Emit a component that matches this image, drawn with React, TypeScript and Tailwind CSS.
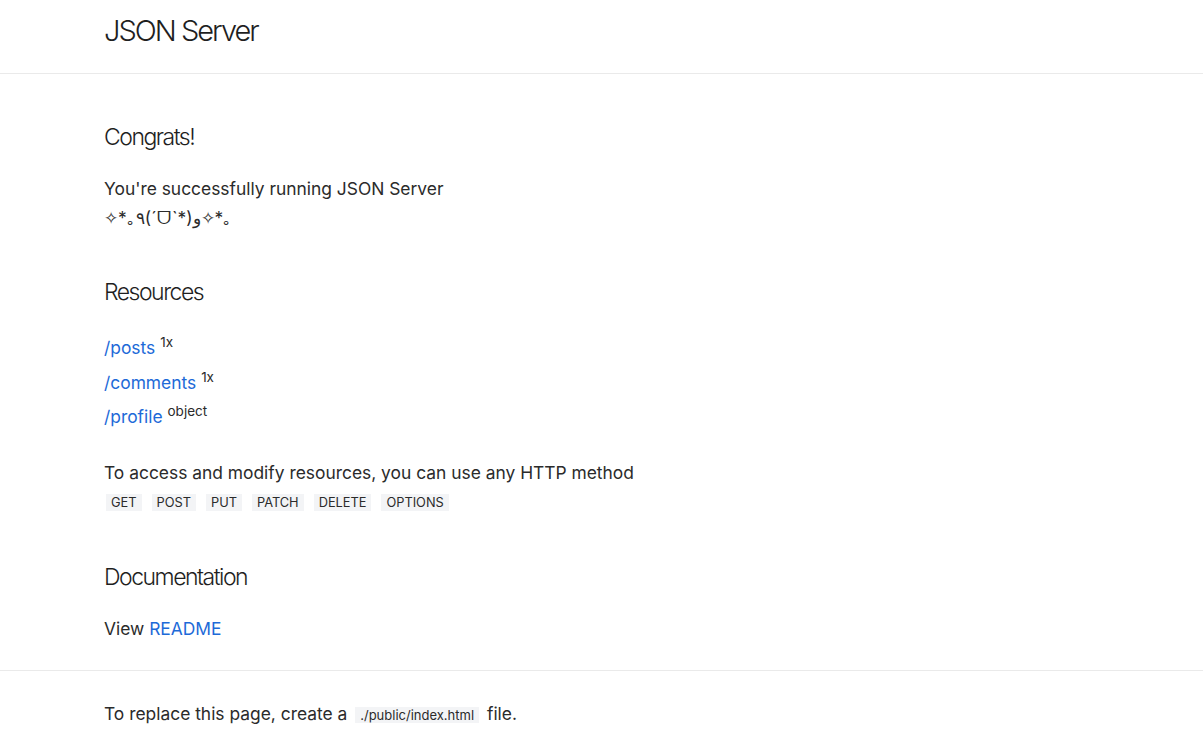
const font = "font-['Inter','Noto_Sans',sans-serif]"

const methods = ["GET", "POST", "PUT", "PATCH", "DELETE", "OPTIONS"]

const resources = [
  { path: "/posts", note: "1x" },
  { path: "/comments", note: "1x" },
  { path: "/profile", note: "object" },
]

export default function App() {
  return (
    <div className={`min-h-screen bg-white text-[#2b2b2b] ${font}`}>
      {/* Header */}
      <header className="border-b border-[#eaeaea]">
        <div className="pl-[104px] h-[73px] pt-[14px]">
          <h1 className="text-[29px] leading-[34px] font-light tracking-[-2px] text-[#1f1f1f]">JSON Server</h1>
        </div>
      </header>

      <main className="pl-[104px] pt-[48px] pb-[27px]">
        {/* Congrats */}
        <section>
          <h2 className="text-[23px] font-light tracking-[-1.5px] text-[#1f1f1f] leading-[30px]">Congrats!</h2>
          <p className="mt-[22px] text-[17.4px] leading-[29px]">
            You're successfully running JSON Server
            <br />
            ✧*｡٩(ˊᗜˋ*)و✧*｡
          </p>
        </section>

        {/* Resources */}
        <section className="mt-[45px]">
          <h2 className="text-[23px] font-light tracking-[-1.5px] text-[#1f1f1f] leading-[30px]">Resources</h2>
          <ul className="mt-[27px] flex flex-col gap-[6.5px]">
            {resources.map((r) => (
              <li key={r.path} className="text-[17.4px] leading-[28px]">
                <a href="#" className="text-[#1d6ad8]">{r.path}</a>{" "}
                <sup className="text-[13.5px]">{r.note}</sup>
              </li>
            ))}
          </ul>
          <p className="mt-[27px] text-[17.4px] leading-[29px]">
            To access and modify resources, you can use any HTTP method
          </p>
          <div className="mt-[7px] flex gap-[10px] ml-[2px]">
            {methods.map((m) => (
              <code key={m} className="bg-[#f3f4f6] px-[5px] text-[12.8px] leading-[17px] font-['Inter',sans-serif]">
                {m}
              </code>
            ))}
          </div>
        </section>

        {/* Documentation */}
        <section className="mt-[51px]">
          <h2 className="text-[23px] font-light tracking-[-1.5px] text-[#1f1f1f] leading-[30px]">Documentation</h2>
          <p className="mt-[22px] text-[17.4px] leading-[29px]">
            View <a href="#" className="text-[#1d6ad8]">README</a>
          </p>
        </section>
      </main>

      {/* Footer */}
      <footer className="border-t border-[#eaeaea]">
        <p className="pl-[104px] pt-[28px] text-[17.4px] leading-[29px]">
          To replace this page, create a{" "}
          <code className="bg-[#f3f4f6] px-[5px] mx-[3px] text-[13px] font-['Inter',sans-serif]">./public/index.html</code>{" "}
          file.
        </p>
      </footer>
    </div>
  )
}
